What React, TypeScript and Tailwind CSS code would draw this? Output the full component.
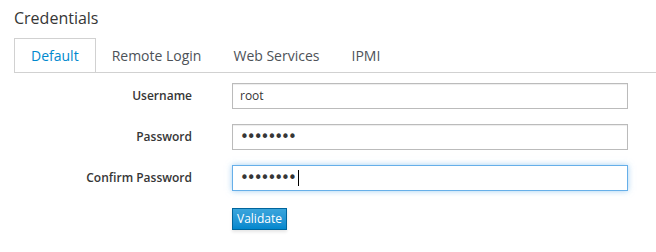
import React from 'react';

const tabs = ['Default', 'Remote Login', 'Web Services', 'IPMI'];

const fields = [
  { label: 'Username', value: 'root', secret: false, focused: false },
  { label: 'Password', value: '••••••••', secret: true, focused: false },
  { label: 'Confirm Password', value: '••••••••', secret: true, focused: true },
];

const App = () => {
  return (
    <div className="w-[656px] h-[252px] bg-white font-['Open_Sans',sans-serif] text-[#363636]">
      <div className="pl-[14px] pt-[7px]">
        <h2 className="text-[16px] leading-[22px] font-normal text-[#363636]">Credentials</h2>

        {/* Tabs */}
        <div className="mt-[9px] flex border-b border-[#d1d1d1]">
          {tabs.map((tab, i) => (
            <div
              key={tab}
              className={
                i === 0
                  ? 'h-[34px] -mb-px flex items-center px-[16px] border border-b-0 border-[#d1d1d1] bg-white text-[14px] text-[#0088ce]'
                  : 'h-[34px] flex items-center px-[16px] text-[14px] text-[#4d5258]'
              }
            >
              {tab}
            </div>
          ))}
        </div>

        {/* Form */}
        <div className="mt-[10px] flex flex-col gap-[15px]">
          {fields.map((f) => (
            <div key={f.label} className="flex items-center">
              <div className="w-[178px] text-right text-[12px] font-semibold text-[#363636]">{f.label}</div>
              <div
                className={
                  f.focused
                    ? 'ml-[40px] w-[396px] h-[26px] flex items-center px-[7px] border border-[#66afe9] shadow-[0_0_6px_rgba(102,175,233,0.6)]'
                    : 'ml-[40px] w-[396px] h-[26px] flex items-center px-[7px] border border-[#bbbbbb] shadow-[inset_0_1px_1px_rgba(3,3,3,0.075)]'
                }
              >
                {f.secret ? (
                  <span className="text-[15px] leading-none tracking-[-2px] text-[#363636] font-['DejaVu_Sans',sans-serif]">{f.value}</span>
                ) : (
                  <span className="text-[12px] text-[#363636]">{f.value}</span>
                )}
                {f.focused && <span className="ml-[3px] w-px h-[16px] bg-black" />}
              </div>
            </div>
          ))}
        </div>

        <div className="mt-[14px] ml-[218px]">
          <button className="h-[22px] px-[4px] text-[12px] leading-none text-white border border-[#00659c] bg-gradient-to-b from-[#39a5dc] to-[#0088ce] shadow-[0_2px_3px_rgba(3,3,3,0.1)]">
            Validate
          </button>
        </div>
      </div>
    </div>
  );
};

export default App;
